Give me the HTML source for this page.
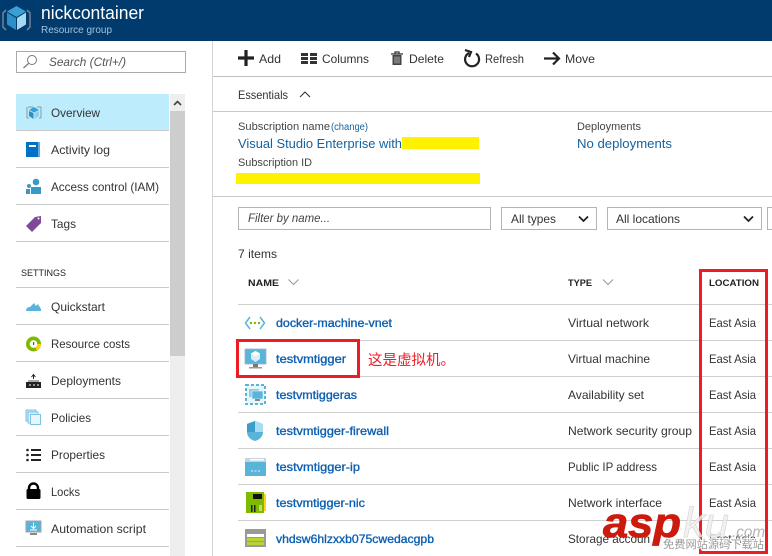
<!DOCTYPE html>
<html><head><meta charset="utf-8"><style>
html,body{margin:0;padding:0;background:#fff;width:772px;height:556px;overflow:hidden}
svg{display:block}
text{font-family:"Liberation Sans","Noto Sans CJK SC",sans-serif;font-size:12px;fill:#333}
.b{fill:#0d5fb0;stroke:#0d5fb0;stroke-width:.35px}
.l{fill:#15629f}
.h{font-weight:bold;font-size:9.5px;fill:#222}
.n{fill:#333}
</style></head><body>
<svg width="772" height="556" viewBox="0 0 772 556" xmlns="http://www.w3.org/2000/svg">
<rect width="772" height="556" fill="#fff"/>
<!-- header -->
<rect width="772" height="41" fill="#013b6e"/>
<path d="M6 10 L3 13 V27 L6 30 M27 10 L30 13 V27 L27 30" fill="none" stroke="#6f7f8e" stroke-width="1.6"/>
<path d="M16.5 6 L26 11.5 L16.5 17 L7 11.5Z" fill="#3b9fd6"/>
<path d="M7 12.5 L16 18 V30 L7 24.5Z" fill="#2d8ec8"/>
<path d="M26 12.5 L17 18 V30 L26 24.5Z" fill="#a4d9f2"/>
<text x="41" y="19" style="font-size:18px;fill:#fff" textLength="103" lengthAdjust="spacingAndGlyphs">nickcontainer</text>
<text x="41" y="33" style="font-size:10px;fill:#a5c2da" textLength="71" lengthAdjust="spacingAndGlyphs">Resource group</text>
<!-- left blade -->
<rect x="212" y="41" width="1" height="515" fill="#d4d4d4"/>
<rect x="16.500" y="51.500" width="169" height="21" fill="#fff" stroke="#aaa"/>
<circle cx="32" cy="60" r="4.500" fill="none" stroke="#777"/>
<path d="M28.500 63.500 L23.500 68" stroke="#777" stroke-width="1.200"/>
<text x="49" y="66" style="font-style:italic;fill:#555" textLength="77" lengthAdjust="spacingAndGlyphs">Search (Ctrl+/)</text>
<rect x="16" y="94" width="153" height="36" fill="#bdecfc"/>
<rect x="170" y="94" width="15" height="462" fill="#eee"/>
<rect x="170" y="111" width="15" height="245" fill="#cdcdcd"/>
<path d="M174 105 L177.500 101.500 L181 105" fill="none" stroke="#444" stroke-width="1.600"/>
<g fill="#c9c9c9">
<rect x="16" y="130" width="153" height="1"/><rect x="16" y="167" width="153" height="1"/><rect x="16" y="204" width="153" height="1"/><rect x="16" y="241" width="153" height="1"/>
<rect x="16" y="287" width="153" height="1"/><rect x="16" y="324" width="153" height="1"/><rect x="16" y="361" width="153" height="1"/><rect x="16" y="398" width="153" height="1"/><rect x="16" y="435" width="153" height="1"/><rect x="16" y="472" width="153" height="1"/><rect x="16" y="509" width="153" height="1"/><rect x="16" y="546" width="153" height="1"/>
</g>
<text x="51" y="117" class="n" textLength="49" lengthAdjust="spacingAndGlyphs">Overview</text>
<text x="51" y="154" class="n" textLength="59" lengthAdjust="spacingAndGlyphs">Activity log</text>
<text x="51" y="191" class="n" textLength="108" lengthAdjust="spacingAndGlyphs">Access control (IAM)</text>
<text x="51" y="228" class="n" textLength="25" lengthAdjust="spacingAndGlyphs">Tags</text>
<text x="21" y="276" style="font-size:9.500px;fill:#222" textLength="45" lengthAdjust="spacingAndGlyphs">SETTINGS</text>
<text x="51" y="311" class="n" textLength="54" lengthAdjust="spacingAndGlyphs">Quickstart</text>
<text x="51" y="348" class="n" textLength="79" lengthAdjust="spacingAndGlyphs">Resource costs</text>
<text x="51" y="385" class="n" textLength="70" lengthAdjust="spacingAndGlyphs">Deployments</text>
<text x="51" y="422" class="n" textLength="40" lengthAdjust="spacingAndGlyphs">Policies</text>
<text x="51" y="459" class="n" textLength="54" lengthAdjust="spacingAndGlyphs">Properties</text>
<text x="51" y="496" class="n" textLength="29" lengthAdjust="spacingAndGlyphs">Locks</text>
<text x="51" y="533" class="n" textLength="95" lengthAdjust="spacingAndGlyphs">Automation script</text>
<!-- left icons -->
<path d="M28 107 L33 107 M37 107 L41 107 M27 107 V118 M41 107 V118 M27 118 H29 M39 118 H41" fill="none" stroke="#8a9aa5"/>
<path d="M34 107 L39 110 L34 112.500 L29 110Z" fill="#3aa0d6"/><path d="M29 111 L33.500 113 V119 L29 116Z" fill="#2e90c8"/><path d="M39 111 L34.500 113 V119 L39 116Z" fill="#8fd0ef"/>
<rect x="26" y="142" width="14" height="15" fill="#0072c6"/><rect x="38" y="142" width="2" height="15" fill="#68a9dc"/><rect x="29" y="145" width="7" height="2" fill="#fff"/>
<circle cx="36" cy="182" r="3.300" fill="#3999c6"/><path d="M31 194 V187 H41 V194Z" fill="#3999c6"/><circle cx="29" cy="186" r="2" fill="#3999c6"/><path d="M26 194 V189 H30 V194Z" fill="#3999c6"/>
<path d="M26 226 L35 217 L41 216 L41 223 L32 232Z" fill="#804998"/><circle cx="38.500" cy="218.500" r="1" fill="#fff"/>
<path d="M26 311 C26 308 28 307 30 307 L34 303 L36 306 L38 304 C39 307 41 307 41 310 V311Z" fill="#59b4d9"/>
<circle cx="33.500" cy="344" r="7.500" fill="#7fba00"/><path d="M33.500 344 L41 344 A7.500 7.500 0 0 1 37 350.500Z" fill="#fcd116"/><circle cx="33.500" cy="344" r="3.800" fill="#fff"/><rect x="33" y="342" width="1.200" height="3" fill="#555"/>
<path d="M33.500 375 V379 M31.500 377 L33.500 374.500 L35.500 377" fill="none" stroke="#222"/><path d="M28 381 H39" stroke="#555"/>
<rect x="26" y="382" width="15" height="6" fill="#222"/><path d="M29 385 h2 M33 385 h2 M37 385 h2" stroke="#fff"/>
<rect x="26" y="410" width="10" height="11" fill="#c5e7f5" stroke="#7cc4e2"/><rect x="28" y="412" width="10" height="11" fill="#d8eff9" stroke="#7cc4e2"/><rect x="30.500" y="414.500" width="10" height="10" fill="#e8f6fc" stroke="#7cc4e2"/>
<g fill="#222"><circle cx="27.500" cy="450" r="1.300"/><circle cx="27.500" cy="455" r="1.300"/><circle cx="27.500" cy="460" r="1.300"/><rect x="31" y="449" width="10" height="2"/><rect x="31" y="454" width="10" height="2"/><rect x="31" y="459" width="10" height="2"/></g>
<path d="M29 490 V488 A4.500 4.500 0 0 1 38 488 V490" fill="none" stroke="#000" stroke-width="2.400"/><rect x="26.500" y="489" width="14" height="10" rx="1.500" fill="#000"/>
<rect x="26" y="521" width="15" height="11" fill="#59b4d9"/><rect x="26" y="521" width="15" height="11" fill="none" stroke="#a0a5a8"/><path d="M33.500 522.500 V528 M31 526 L33.500 528.500 L36 526 M30 530 h7" fill="none" stroke="#fff"/><rect x="30" y="533" width="7" height="2" fill="#888"/>
<!-- toolbar -->
<rect x="213" y="76" width="559" height="1" fill="#c0c0c0"/>
<rect x="213" y="111" width="559" height="1" fill="#c8c8c8"/>
<rect x="213" y="196" width="559" height="1" fill="#c8c8c8"/>
<path d="M238 58 H254 M246 50 V66" stroke="#222" stroke-width="3.200"/>
<text x="259" y="63" class="n" textLength="22" lengthAdjust="spacingAndGlyphs">Add</text>
<g fill="#333"><rect x="301" y="53" width="7" height="3"/><rect x="301" y="57" width="7" height="3"/><rect x="301" y="61" width="7" height="3"/><rect x="310" y="53" width="7" height="3"/><rect x="310" y="57" width="7" height="3"/><rect x="310" y="61" width="7" height="3"/></g>
<text x="322" y="63" class="n" textLength="47" lengthAdjust="spacingAndGlyphs">Columns</text>
<path d="M391 54 H403 M395 54 V52 H399 V54" fill="none" stroke="#333" stroke-width="1.300"/><path d="M392.500 55 H401.500 V65 H392.500Z" fill="#444"/><path d="M395 56.500 V63.500 M397 56.500 V63.500 M399 56.500 V63.500" stroke="#ccc" stroke-width=".8"/>
<text x="409" y="63" class="n" textLength="35" lengthAdjust="spacingAndGlyphs">Delete</text>
<path d="M469 53 A7 7 0 1 0 476 53.500" fill="none" stroke="#222" stroke-width="2.200"/><path d="M465 50 L471 52 L469 57" fill="none" stroke="#222" stroke-width="2.200"/>
<text x="485" y="63" class="n" textLength="39" lengthAdjust="spacingAndGlyphs">Refresh</text>
<path d="M544 58.500 H558 M553 52.500 L559 58.500 L553 64.500" fill="none" stroke="#222" stroke-width="2.200"/>
<text x="565" y="63" class="n" textLength="30" lengthAdjust="spacingAndGlyphs">Move</text>
<text x="238" y="99" class="n" textLength="50" lengthAdjust="spacingAndGlyphs">Essentials</text>
<path d="M300 97 L305 92 L310 97" fill="none" stroke="#333" stroke-width="1.100"/>
<!-- essentials -->
<text x="238" y="130" style="font-size:11px;fill:#444" textLength="92" lengthAdjust="spacingAndGlyphs">Subscription name</text>
<text x="331" y="130" style="font-size:10px;fill:#15629f" textLength="37" lengthAdjust="spacingAndGlyphs">(change)</text>
<text x="238" y="148" style="font-size:13px" class="l" textLength="164" lengthAdjust="spacingAndGlyphs">Visual Studio Enterprise with</text>
<rect x="402" y="137" width="77" height="12" fill="#fff200"/>
<text x="238" y="166" style="font-size:11px;fill:#444" textLength="74" lengthAdjust="spacingAndGlyphs">Subscription ID</text>
<rect x="236" y="173" width="244" height="11" fill="#fff200"/>
<text x="577" y="130" style="font-size:11px;fill:#444" textLength="64" lengthAdjust="spacingAndGlyphs">Deployments</text>
<text x="577" y="148" style="font-size:13px" class="l" textLength="95" lengthAdjust="spacingAndGlyphs">No deployments</text>
<!-- filters -->
<rect x="238.500" y="207.500" width="252" height="22" fill="#fff" stroke="#b4b4b4"/>
<text x="248" y="222" style="font-style:italic;fill:#444" textLength="82" lengthAdjust="spacingAndGlyphs">Filter by name...</text>
<rect x="501.500" y="207.500" width="95" height="22" fill="#fff" stroke="#b4b4b4"/>
<text x="511" y="223" class="n" textLength="45" lengthAdjust="spacingAndGlyphs">All types</text>
<path d="M579 216.500 L583.500 221 L588 216.500" fill="none" stroke="#222" stroke-width="1.800"/>
<rect x="607.500" y="207.500" width="154" height="22" fill="#fff" stroke="#b4b4b4"/>
<text x="616" y="223" class="n" textLength="64" lengthAdjust="spacingAndGlyphs">All locations</text>
<path d="M744 216.500 L748.500 221 L753 216.500" fill="none" stroke="#222" stroke-width="1.800"/>
<path d="M772 207.500 H767.500 V229.500 H772" fill="#fff" stroke="#b4b4b4"/>
<text x="238" y="258" class="n" textLength="39" lengthAdjust="spacingAndGlyphs">7 items</text>
<text x="248" y="286" class="h" textLength="31" lengthAdjust="spacingAndGlyphs">NAME</text>
<path d="M288.500 279.500 L293.500 284.500 L298.500 279.500" fill="none" stroke="#999"/>
<text x="568" y="286" class="h" textLength="24" lengthAdjust="spacingAndGlyphs">TYPE</text>
<path d="M603 279.500 L608 284.500 L613 279.500" fill="none" stroke="#999"/>
<text x="709" y="286" class="h" textLength="50" lengthAdjust="spacingAndGlyphs">LOCATION</text>
<!-- row lines -->
<g fill="#cfcfcf"><rect x="238" y="304" width="534" height="1"/><rect x="238" y="340" width="534" height="1"/><rect x="238" y="376" width="534" height="1"/><rect x="238" y="412" width="534" height="1"/><rect x="238" y="448" width="534" height="1"/><rect x="238" y="484" width="534" height="1"/><rect x="238" y="520" width="534" height="1"/></g>
<!-- rows -->
<text x="276" y="327" class="b" textLength="116" lengthAdjust="spacingAndGlyphs">docker-machine-vnet</text>
<text x="276" y="363" class="b" textLength="70" lengthAdjust="spacingAndGlyphs">testvmtigger</text>
<text x="276" y="399" class="b" textLength="81" lengthAdjust="spacingAndGlyphs">testvmtiggeras</text>
<text x="276" y="435" class="b" textLength="113" lengthAdjust="spacingAndGlyphs">testvmtigger-firewall</text>
<text x="276" y="471" class="b" textLength="84" lengthAdjust="spacingAndGlyphs">testvmtigger-ip</text>
<text x="276" y="507" class="b" textLength="89" lengthAdjust="spacingAndGlyphs">testvmtigger-nic</text>
<text x="276" y="543" class="b" textLength="158" lengthAdjust="spacingAndGlyphs">vhdsw6hlzxxb075cwedacgpb</text>
<text x="568" y="327" class="n" textLength="81" lengthAdjust="spacingAndGlyphs">Virtual network</text>
<text x="568" y="363" class="n" textLength="82" lengthAdjust="spacingAndGlyphs">Virtual machine</text>
<text x="568" y="399" class="n" textLength="76" lengthAdjust="spacingAndGlyphs">Availability set</text>
<text x="568" y="435" class="n" textLength="124" lengthAdjust="spacingAndGlyphs">Network security group</text>
<text x="568" y="471" class="n" textLength="89" lengthAdjust="spacingAndGlyphs">Public IP address</text>
<text x="568" y="507" class="n" textLength="94" lengthAdjust="spacingAndGlyphs">Network interface</text>
<text x="568" y="543" class="n" textLength="82" lengthAdjust="spacingAndGlyphs">Storage accoun</text>
<g class="n">
<text x="709" y="327" textLength="47" lengthAdjust="spacingAndGlyphs">East Asia</text>
<text x="709" y="363" textLength="47" lengthAdjust="spacingAndGlyphs">East Asia</text>
<text x="709" y="399" textLength="47" lengthAdjust="spacingAndGlyphs">East Asia</text>
<text x="709" y="435" textLength="47" lengthAdjust="spacingAndGlyphs">East Asia</text>
<text x="709" y="471" textLength="47" lengthAdjust="spacingAndGlyphs">East Asia</text>
<text x="709" y="507" textLength="47" lengthAdjust="spacingAndGlyphs">East Asia</text>
<text x="709" y="543" textLength="47" lengthAdjust="spacingAndGlyphs">East Asia</text>
</g>
<!-- row icons -->
<path d="M250 317 L245.500 323 L250 329 M260 317 L264.500 323 L260 329" fill="none" stroke="#59b4d9" stroke-width="1.500"/>
<g fill="#7fba00"><circle cx="251" cy="323" r="1.200"/><circle cx="255" cy="323" r="1.200"/><circle cx="259" cy="323" r="1.200"/></g>
<rect x="245" y="349" width="21" height="15" fill="#59b4d9"/><rect x="245" y="349" width="21" height="15" fill="none" stroke="#9fb4bf" stroke-width=".8"/>
<path d="M255.500 351 L260 353.500 V359 L255.500 362 L251 359 V353.500Z" fill="#d7eff9"/><path d="M255.500 351 L260 353.500 L255.500 356 L251 353.500Z" fill="#fff"/>
<rect x="253" y="364" width="5" height="3" fill="#777"/><rect x="249" y="367" width="13" height="1.500" fill="#999"/>
<rect x="246" y="385" width="19" height="19" fill="#e8f5fb" stroke="#59b4d9" stroke-width="2" stroke-dasharray="3 2"/>
<rect x="249" y="389" width="10" height="8" fill="#8fcbe6"/><rect x="252" y="391" width="11" height="8" fill="#59b4d9" stroke="#e8f5fb" stroke-width=".6"/><rect x="255" y="399" width="5" height="2" fill="#888"/>
<path d="M255 421 L263 424 V432 C263 437 259 440 255 441 C251 440 247 437 247 432 V424Z" fill="#59b4d9"/>
<path d="M255 421 L263 424 V432 H255Z" fill="#a8dcf2"/><path d="M255 432 H247 V424 L255 421Z" fill="#3c9ecb"/>
<rect x="245" y="458" width="21" height="18" fill="#59b4d9"/><rect x="245" y="458" width="21" height="4" fill="#c8d4da"/><rect x="250" y="459" width="14" height="1.500" fill="#fff"/>
<path d="M251 471 h2 M254.500 471 h2 M258 471 h2" stroke="#e8f5fb"/>
<rect x="246" y="492" width="18" height="21" fill="#7fba00"/><rect x="264" y="494" width="2" height="17" fill="#ffd21f"/><rect x="253" y="494" width="9" height="5" fill="#111"/><rect x="251" y="505" width="1.500" height="7" fill="#222"/><rect x="254" y="505" width="1.500" height="7" fill="#222"/><rect x="259" y="505" width="3" height="6" fill="#bde06b"/>
<rect x="245" y="529" width="21" height="18" fill="#9a9a9a"/><rect x="247" y="534" width="17" height="3" fill="#fff"/><rect x="247" y="538" width="17" height="3" fill="#b8d432"/><rect x="247" y="542" width="17" height="3" fill="#b8d432"/>
<!-- annotations -->
<rect x="237.500" y="340.500" width="121" height="36" fill="none" stroke="#ed1c24" stroke-width="3"/>
<text x="368" y="365" style="font-size:14.500px;fill:#ed1c24">这是虚拟机。</text>
<rect x="700.500" y="270.500" width="66" height="282" fill="none" stroke="#ed1c24" stroke-width="3"/>
<!-- watermark -->
<text x="603" y="537" style="font-size:42px;font-weight:bold;font-style:italic;fill:#cc1a0c;stroke:#cc1a0c;stroke-width:.8px" textLength="78" lengthAdjust="spacingAndGlyphs">asp</text>
<text x="683" y="537" style="font-size:42px;font-style:italic;fill:#eee;fill-opacity:.8;stroke:#ccc;stroke-width:.5px" textLength="46" lengthAdjust="spacingAndGlyphs">ku</text>
<text x="732" y="537" style="font-size:16px;font-style:italic;fill:#b5b5b5" textLength="33" lengthAdjust="spacingAndGlyphs">.com</text>
<text x="663" y="548" style="font-size:11px;fill:#999;stroke:#fff;stroke-width:2px;paint-order:stroke" textLength="101" lengthAdjust="spacingAndGlyphs">免费网站源码下载站</text>
</svg>
</body></html>
